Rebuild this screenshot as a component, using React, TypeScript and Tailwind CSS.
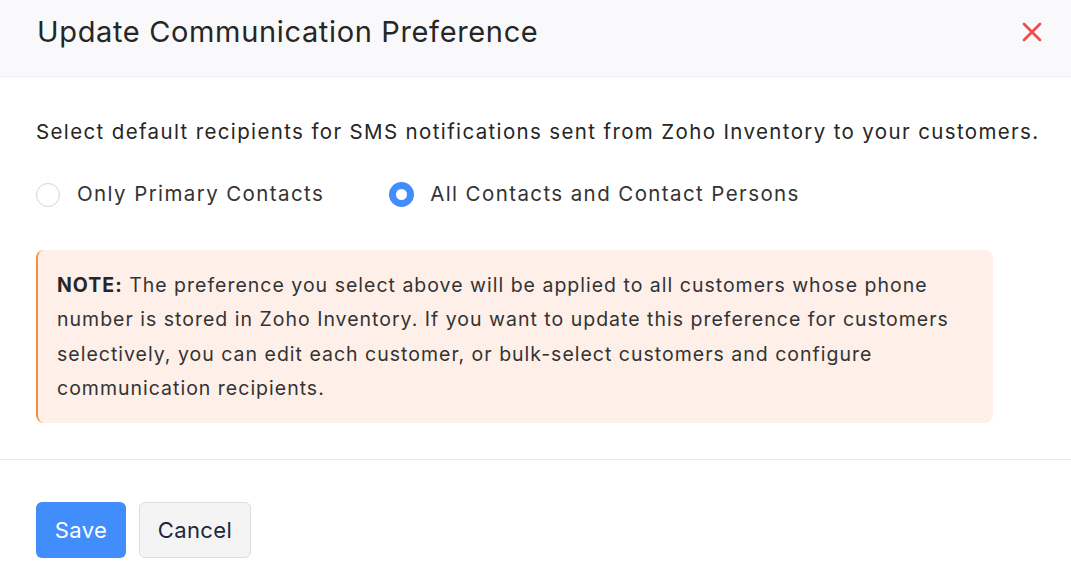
import React from "react";

export default function App() {
  return (
    <div className="w-[1071px] h-[584px] bg-white text-[#21263c] overflow-hidden" style={{ fontFamily: "Inter, 'Noto Sans', sans-serif" }}>
      <div className="h-[77px] bg-[#f9f9fb] border-b border-[#eeeef2] flex items-center justify-between pl-[37px] pr-[28px]">
        <div className="text-[29px] text-[#262626] tracking-[0.65px] pb-[12px]">Update Communication Preference</div>
        <svg width="22" height="22" viewBox="0 0 22 22" className="mb-[12px]">
          <path d="M3 3 L19 19 M19 3 L3 19" stroke="#f44848" strokeWidth="2.6" strokeLinecap="round" />
        </svg>
      </div>
      <div className="px-[36px] pt-[41px]">
        <div className="text-[20.5px] text-[#262626] leading-[28px] tracking-[1.36px] whitespace-nowrap">Select default recipients for SMS notifications sent from Zoho Inventory to your customers.</div>
        <div className="flex items-center mt-[36px] text-[20.5px] tracking-[1.4px] text-[#333] h-[25px]">
          <div className="flex items-center">
            <span className="w-[24px] h-[24px] rounded-full border-[1.5px] border-[#d5d5d8] bg-white" />
            <span className="ml-[17px]">Only Primary Contacts</span>
          </div>
          <div className="flex items-center ml-[65px]">
            <span className="w-[25px] h-[25px] rounded-full border-[7px] border-[#408dfb] bg-white" />
            <span className="ml-[16px]">All Contacts and Contact Persons</span>
          </div>
        </div>
        <div className="mt-[43px] w-[957px] bg-[#fef0e9] rounded-[8px] border-l-[2.5px] border-[#f69133] pl-[19px] pr-[20px] pt-[18px] pb-[18px] text-[19.5px] leading-[34.3px] tracking-[1px] text-[#333]">
          <span className="font-bold text-[#262626]">NOTE:</span> The preference you select above will be applied to all customers whose phone number is stored in Zoho Inventory. If you want to update this preference for customers selectively, you can edit each customer, or bulk-select customers and configure communication recipients.
        </div>
      </div>
      <div className="mt-[36px] border-t border-[#ebebef]" />
      <div className="flex gap-[13px] px-[36px] pt-[42px]">
        <button className="w-[90px] h-[56px] rounded-[6px] bg-[#408dfb] text-white text-[22px] tracking-[0.4px]">Save</button>
        <button className="w-[112px] h-[56px] rounded-[6px] bg-[#f4f4f5] border border-[#dedee2] text-[#21263c] text-[22px] tracking-[0.4px]">Cancel</button>
      </div>
    </div>
  );
}
